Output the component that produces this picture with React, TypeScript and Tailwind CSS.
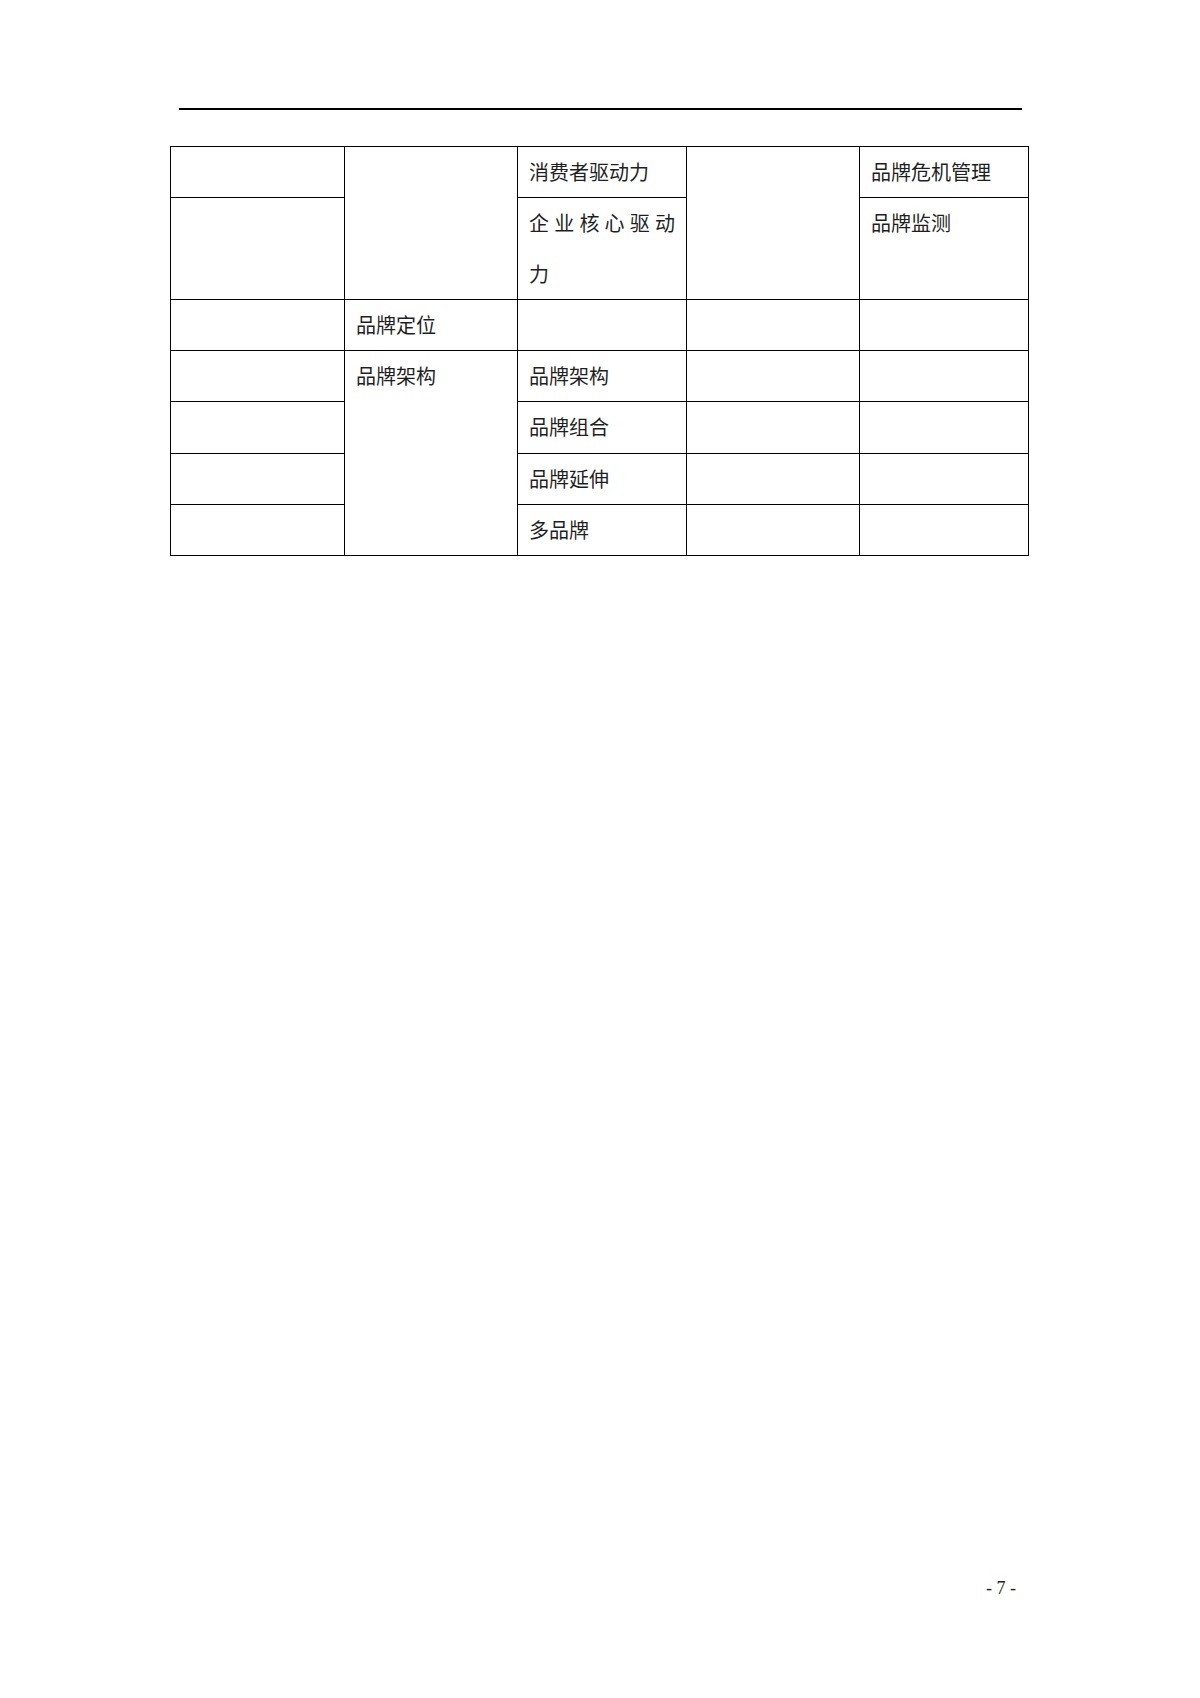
import React from 'react';

const cell = 'border border-black align-top px-[11px] leading-[50.3px] text-[20px] text-[#1f1f1f] text-left';

export default function App() {
  return (
    <div
      className="w-[1200px] h-[1698px] bg-white flex flex-col"
      style={{ fontFamily: '"Noto Sans CJK SC", "Liberation Sans", sans-serif' }}
    >
      <div className="ml-[179px] mt-[108px] w-[843px] h-[2px] bg-black" />
      <table className="ml-[170px] mt-[36px] border-collapse table-fixed w-[858px]">
        <colgroup>
          <col className="w-[174px]" />
          <col className="w-[173px]" />
          <col className="w-[169px]" />
          <col className="w-[173px]" />
          <col className="w-[169px]" />
        </colgroup>
        <tbody>
          <tr>
            <td className={cell}></td>
            <td className={cell} rowSpan={2}></td>
            <td className={cell}>消费者驱动力</td>
            <td className={cell} rowSpan={2}></td>
            <td className={cell}>品牌危机管理</td>
          </tr>
          <tr>
            <td className={cell}></td>
            <td className={cell}>
              <div className="[text-align-last:justify]">企业核心驱动</div>
              <div>力</div>
            </td>
            <td className={cell}>品牌监测</td>
          </tr>
          <tr>
            <td className={cell}></td>
            <td className={cell}>品牌定位</td>
            <td className={cell}></td>
            <td className={cell}></td>
            <td className={cell}></td>
          </tr>
          <tr>
            <td className={cell}></td>
            <td className={cell} rowSpan={4}>品牌架构</td>
            <td className={cell}>品牌架构</td>
            <td className={cell}></td>
            <td className={cell}></td>
          </tr>
          <tr>
            <td className={cell}></td>
            <td className={cell}>品牌组合</td>
            <td className={cell}></td>
            <td className={cell}></td>
          </tr>
          <tr>
            <td className={cell}></td>
            <td className={cell}>品牌延伸</td>
            <td className={cell}></td>
            <td className={cell}></td>
          </tr>
          <tr>
            <td className={cell}></td>
            <td className={cell}>多品牌</td>
            <td className={cell}></td>
            <td className={cell}></td>
          </tr>
        </tbody>
      </table>
      <div className="mt-auto mb-[96px] ml-[986px] text-[18px] text-[#222]" style={{ fontFamily: '"Liberation Serif", serif' }}>
        - 7 -
      </div>
    </div>
  );
}
